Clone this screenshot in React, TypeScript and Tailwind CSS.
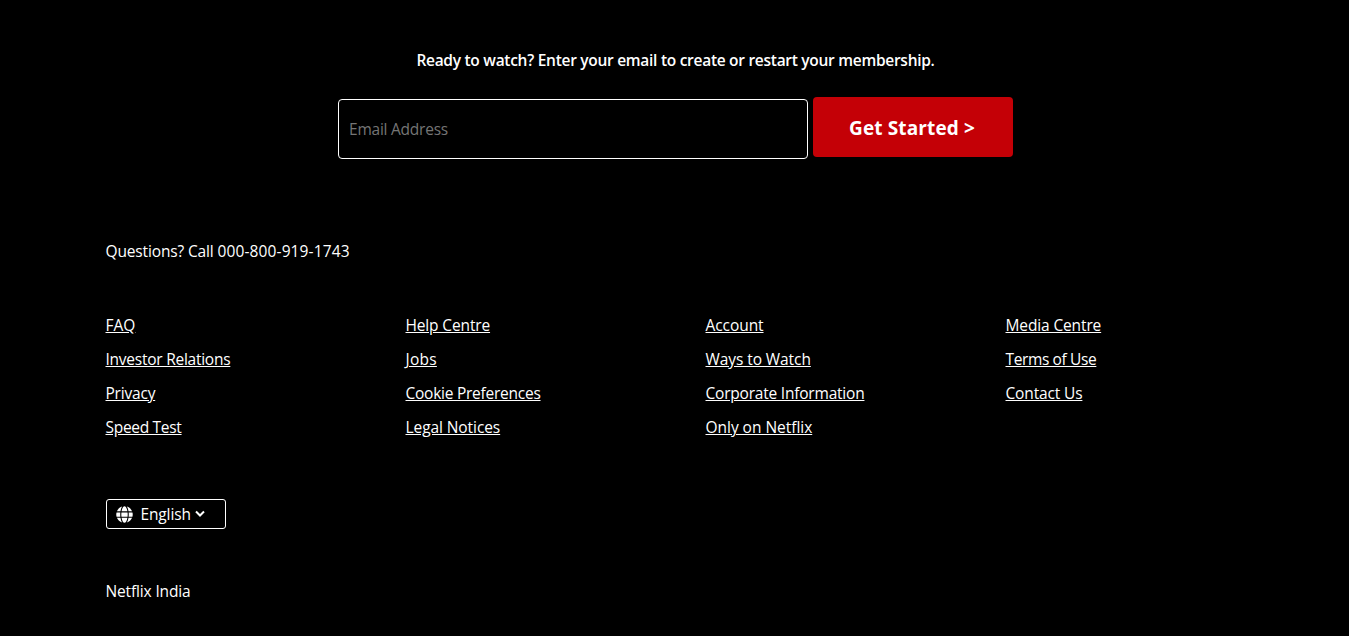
import { FaGlobe } from "react-icons/fa";

type FooterLink = { label: string; tracking: string };

const columns: FooterLink[][] = [
  [
    { label: "FAQ", tracking: "tracking-[0px]" },
    { label: "Investor Relations", tracking: "tracking-[-0.25px]" },
    { label: "Privacy", tracking: "tracking-[-0.2px]" },
    { label: "Speed Test", tracking: "tracking-[-0.3px]" },
  ],
  [
    { label: "Help Centre", tracking: "tracking-[-0.14px]" },
    { label: "Jobs", tracking: "tracking-[0.25px]" },
    { label: "Cookie Preferences", tracking: "tracking-[-0.25px]" },
    { label: "Legal Notices", tracking: "tracking-[-0.08px]" },
  ],
  [
    { label: "Account", tracking: "tracking-[-0.07px]" },
    { label: "Ways to Watch", tracking: "tracking-[-0.08px]" },
    { label: "Corporate Information", tracking: "tracking-[-0.21px]" },
    { label: "Only on Netflix", tracking: "tracking-[-0.03px]" },
  ],
  [
    { label: "Media Centre", tracking: "tracking-[-0.13px]" },
    { label: "Terms of Use", tracking: "tracking-[-0.37px]" },
    { label: "Contact Us", tracking: "tracking-[-0.15px]" },
  ],
];

function SignUp() {
  return (
    <form className="flex flex-col items-center pt-12 pl-0.5" onSubmit={(e) => e.preventDefault()}>
      <h3 className="text-[15.5px] leading-6 font-semibold tracking-[-0.28px] whitespace-nowrap">
        Ready to watch? Enter your email to create or restart your membership.
      </h3>
      <div className="mt-[25px] flex items-start gap-[5px]">
        <input
          type="email"
          placeholder="Email Address"
          className="mt-0.5 h-[60px] w-[470px] rounded border border-white bg-black px-2.5 text-[15.5px] tracking-[-0.23px] text-white outline-none placeholder:text-[#757575]"
        />
        <button className="h-[60px] w-[200px] rounded bg-[#c40006] pt-px pr-0.5 text-[19px] font-bold tracking-[0.13px] whitespace-nowrap">
          Get Started &gt;
        </button>
      </div>
    </form>
  );
}

function LanguagePicker() {
  return (
    <button className="mt-[60px] flex h-[30px] w-[120px] items-center rounded-[3px] border border-white pl-[9px] text-[15.5px]">
      <FaGlobe className="size-[17px]" />
      <span className="ml-2 tracking-[-0.14px]">English</span>
      <svg className="ml-1 h-2 w-2.5" viewBox="0 0 10 8" fill="none" stroke="currentColor" strokeWidth="2">
        <path d="M1 1.5 5 5.5 9 1.5" />
      </svg>
    </button>
  );
}

export default function App() {
  return (
    <div className="h-[636px] w-full overflow-hidden bg-black font-['Open_Sans',sans-serif] text-[15.5px] leading-6 text-white">
      <SignUp />
      <footer className="pt-20 pl-[105.5px]">
        <p>
          <span className="tracking-[-0.14px]">Questions? Call </span>
          <span className="tracking-[0.12px]">000-800-919-1743</span>
        </p>
        <nav className="mt-[50px] grid grid-cols-[repeat(4,300px)]">
          {columns.map((links, i) => (
            <ul key={i} className="flex flex-col gap-2.5">
              {links.map(({ label, tracking }) => (
                <li key={label} className="h-6">
                  <a href="#" className={`underline underline-offset-1 ${tracking}`}>{label}</a>
                </li>
              ))}
            </ul>
          ))}
        </nav>
        <LanguagePicker />
        <p className="mt-[50px] tracking-[-0.15px]">Netflix India</p>
      </footer>
    </div>
  );
}
